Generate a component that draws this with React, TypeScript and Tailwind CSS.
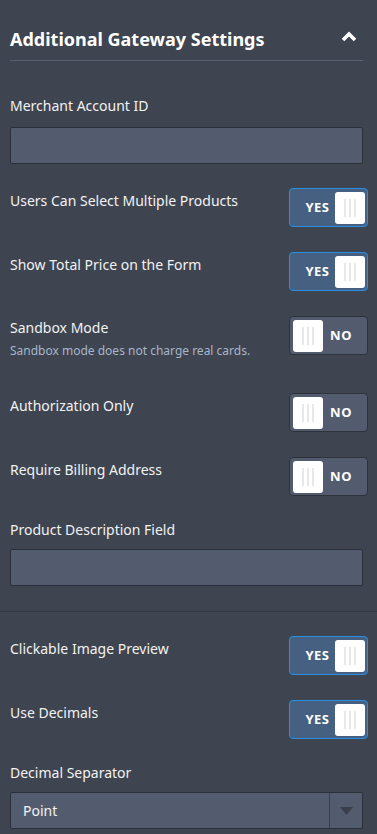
import React from 'react';

const font = { fontFamily: '"Noto Sans", "Open Sans", sans-serif' };

const Grip = () => (
  <div className="flex h-[32px] w-[30px] items-center justify-center gap-[3px] rounded-[3px] bg-white">
    <span className="h-[18px] w-[2px] bg-[#e8e8e8]" />
    <span className="h-[18px] w-[2px] bg-[#e8e8e8]" />
    <span className="h-[18px] w-[2px] bg-[#e8e8e8]" />
  </div>
);

const Toggle = ({ on }: { on: boolean }) =>
  on ? (
    <div className="mr-[-5px] flex h-[39px] w-[79px] shrink-0 items-center justify-between rounded-[4px] border border-[#2a8fe4] bg-[#456080] pl-[10px] pr-[2px]">
      <span className="flex-1 text-center text-[13px] font-bold tracking-[0.5px] text-white">YES</span>
      <Grip />
    </div>
  ) : (
    <div className="mr-[-5px] flex h-[39px] w-[79px] shrink-0 items-center justify-between rounded-[4px] border border-[#2d323b] bg-[#525c6e] pl-[3px] pr-[8px]">
      <Grip />
      <span className="flex-1 text-center text-[13px] font-bold tracking-[0.5px] text-white">NO</span>
    </div>
  );

const ToggleRow = ({ label, on, sub, className }: { label: string; on: boolean; sub?: string; className: string }) => (
  <div className={`flex items-start justify-between ${className}`}>
    <div className={sub ? 'pt-[2px]' : 'pt-[3px]'}>
      <div className="text-[14px] leading-[20px] text-[#f2f2f2]">{label}</div>
      {sub && <div className="mt-[5px] text-[12px] leading-[16px] text-[#a7b6ca]">{sub}</div>}
    </div>
    <Toggle on={on} />
  </div>
);

const Input = ({ className }: { className: string }) => (
  <div className={`h-[37px] rounded-[2px] border border-[#2b3038] bg-[#525c6e] ${className}`} />
);

export default function App() {
  return (
    <div className="min-h-[834px] w-[377px] bg-[#3e4450] text-white" style={font}>
      <div className="pb-[25px] pl-[10px] pr-[14px]">
        <div className="flex items-center justify-between border-b border-[#566070] pb-[7px] pt-[25px]">
          <h2 className="text-[18px] font-bold leading-[28px] text-white">Additional Gateway Settings</h2>
          <svg width="16" height="12" viewBox="0 0 16 12" className="mr-[6px] mt-[-6px]">
            <path d="M2 10 L8 4 L14 10" fill="none" stroke="white" strokeWidth="3.6" strokeLinejoin="miter" />
          </svg>
        </div>

        <div className="mt-[35px] text-[14px] leading-[20px] text-[#f2f2f2]">Merchant Account ID</div>
        <Input className="mt-[11px]" />

        <ToggleRow className="mt-[24px]" label="Users Can Select Multiple Products" on />
        <ToggleRow className="mt-[25px]" label="Show Total Price on the Form" on />
        <ToggleRow
          className="mt-[25px]"
          label="Sandbox Mode"
          on={false}
          sub="Sandbox mode does not charge real cards."
        />
        <ToggleRow className="mt-[34px]" label="Authorization Only" on={false} />
        <ToggleRow className="mt-[25px]" label="Require Billing Address" on={false} />

        <div className="mt-[24px] text-[14px] leading-[20px] text-[#f2f2f2]">Product Description Field</div>
        <Input className="mt-[9px]" />
      </div>

      <div className="border-t border-[#353a44] pl-[10px] pr-[14px]">
        <ToggleRow className="mt-[24px]" label="Clickable Image Preview" on />
        <ToggleRow className="mt-[25px]" label="Use Decimals" on />

        <div className="mt-[24px] text-[14px] leading-[20px] text-[#f2f2f2]">Decimal Separator</div>
        <div className="mt-[9px] flex h-[37px] rounded-[2px] border border-[#2b3038] bg-[#525c6e]">
          <div className="flex flex-1 items-center pl-[12px] text-[14px] text-[#f2f2f2]">Point</div>
          <div className="flex w-[33px] items-center justify-center border-l border-[#3a404b]">
            <svg width="13" height="8" viewBox="0 0 13 8">
              <path d="M0 0 H13 L6.5 8 Z" fill="#3a404b" />
            </svg>
          </div>
        </div>
      </div>
    </div>
  );
}
